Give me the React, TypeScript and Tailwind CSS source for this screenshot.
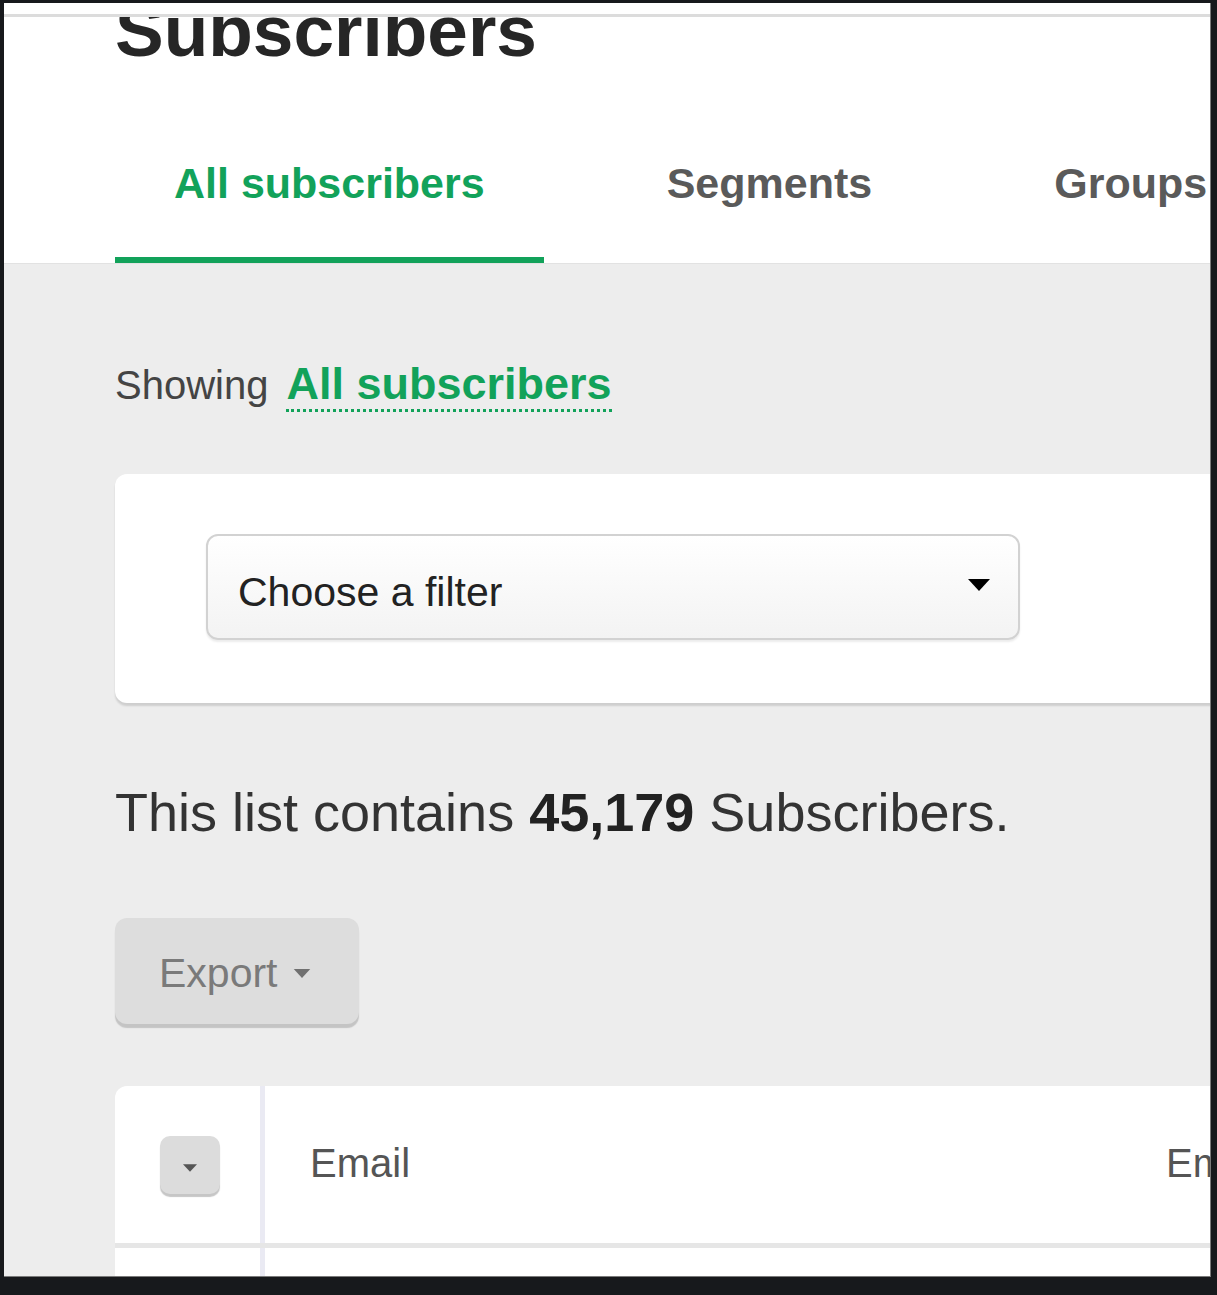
import React from "react";

const font = { fontFamily: '"Liberation Sans", Arial, sans-serif' };

function Caret({ className }: { className?: string }) {
  return (
    <svg viewBox="0 0 22 12" className={className} fill="currentColor">
      <path d="M0 0 L22 0 L11 12 Z" />
    </svg>
  );
}

export default function App() {
  return (
    <div className="w-[1217px] h-[1295px] bg-[#17191c] pt-[3px] pl-[4px] pr-[6px] pb-[18px]" style={font}>
      <div className="w-[1207px] h-[1274px] overflow-hidden flex flex-col bg-[#ededed] border-r border-b border-[#7a7a7a]">
        <div className="h-[11px] bg-white shrink-0" />
        <div className="h-[3px] bg-[#dcdcdc] shrink-0" />
        <div className="flex-1 overflow-hidden">
          {/* header */}
          <div className="bg-white pl-[111px] shadow-[0_1px_0_#e2e2e2]">
            <div className="h-[92px] overflow-hidden">
              <h1 className="-mt-[23px] text-[73px] leading-[73px] font-bold text-[#262626]">
                Subscribers
              </h1>
            </div>
            <div className="flex gap-[64px] whitespace-nowrap">
              <div className="h-[154px] px-[59px] flex items-center border-b-[6px] border-[#12a25a] text-[43px] font-bold text-[#12a25a]">
                All subscribers
              </div>
              <div className="h-[154px] px-[59px] flex items-center border-b-[6px] border-transparent text-[43px] font-bold text-[#5a5a5a]">
                Segments
              </div>
              <div className="h-[154px] px-[59px] flex items-center border-b-[6px] border-transparent text-[43px] font-bold text-[#5a5a5a]">
                Groups
              </div>
            </div>
          </div>

          {/* body */}
          <div className="pl-[111px] w-[1500px]">
            <div className="mt-[95px] h-[52px] leading-[52px] whitespace-nowrap">
              <span className="text-[40px] text-[#444]">Showing</span>
              <span className="ml-[18px] text-[45px] font-bold text-[#12a25a] border-b-[3px] border-dotted border-[#12a25a]">
                All subscribers
              </span>
            </div>

            <div className="mt-[64px] w-[1300px] h-[229px] bg-white rounded-[12px] shadow-[0_3px_2px_rgba(0,0,0,0.13)] pl-[91px] pt-[60px]">
              <div className="w-[814px] h-[106px] rounded-[12px] border-2 border-[#d2d2d2] bg-gradient-to-b from-white to-[#f3f3f3] shadow-[0_2px_2px_rgba(0,0,0,0.08)] flex items-center pl-[30px] pr-[28px]">
                <span className="flex-1 mt-[12px] text-[41px] text-[#222]">Choose a filter</span>
                <Caret className="w-[22px] h-[12px] text-black -mt-[4px]" />
              </div>
            </div>

            <div className="mt-[78px] h-[62px] leading-[62px] text-[54px] text-[#333] whitespace-nowrap">
              This list contains <span className="font-bold text-[#222]">45,179</span> Subscribers.
            </div>

            <div className="mt-[75px] w-[244px] h-[106px] rounded-[12px] bg-[#dddddd] shadow-[0_4px_1px_#c4c4c4] flex items-center pl-[44px]">
              <span className="mt-[6px] text-[41px] text-[#7a7a7a]">Export</span>
              <Caret className="ml-[14px] mt-[4px] w-[20px] h-[9px] text-[#707070]" />
            </div>

            <div className="mt-[62px] w-[1300px] bg-white rounded-tl-[12px]">
              <div className="flex h-[157px]">
                <div className="w-[145px] flex items-center pl-[45px]">
                  <div className="w-[60px] h-[58px] rounded-[10px] bg-[#dcdcdc] shadow-[0_3px_1px_#c6c6c6] flex items-center justify-center">
                    <Caret className="w-[14px] h-[8px] text-[#555] mt-[6px]" />
                  </div>
                </div>
                <div className="w-[5px] bg-[#eaeaf3]" />
                <div className="w-[856px] pl-[45px] flex items-center text-[40px] text-[#555]">
                  <span className="-mt-[4px]">Email</span>
                </div>
                <div className="pl-[45px] flex items-center text-[40px] text-[#555]">
                  <span className="-mt-[4px]">Email status</span>
                </div>
              </div>
              <div className="h-[5px] bg-[#e6e6e6]" />
              <div className="flex h-[100px]">
                <div className="w-[145px]" />
                <div className="w-[5px] bg-[#eaeaf3]" />
                <div className="flex-1" />
              </div>
            </div>
          </div>
        </div>
      </div>
    </div>
  );
}
